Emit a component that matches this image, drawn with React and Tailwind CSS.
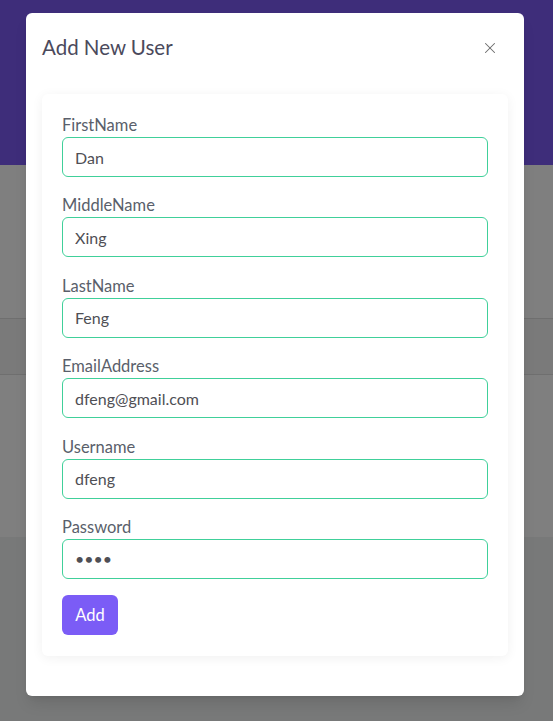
import React from 'react';
import { X } from 'lucide-react';

const fields = [
  { label: 'FirstName', value: 'Dan' },
  { label: 'MiddleName', value: 'Xing' },
  { label: 'LastName', value: 'Feng' },
  { label: 'EmailAddress', value: 'dfeng@gmail.com' },
  { label: 'Username', value: 'dfeng' },
  { label: 'Password', value: 'abcd', type: 'password' },
];

export default function App() {
  return (
    <div className="relative min-h-[721px] bg-[#787979] font-['Lato','Noto_Sans',sans-serif]">
      {/* dimmed page behind the dialog */}
      <div className="h-[165px] bg-[#3e2d7a]" />
      <div className="h-[153px] bg-[#7f7f7f]" />
      <div className="h-[57px] bg-[#7a7a7a] border-y border-[#6f6f6f]" />
      <div className="h-[162px] bg-[#7f7f7f]" />

      <div className="absolute left-[26px] top-[13px] w-[498px] bg-white rounded-md shadow-lg">
        <div className="flex items-center justify-between px-4 pt-5">
          <h2 className="text-[20.5px] leading-7 text-[#4b4a5c]">Add New User</h2>
          <button className="mr-[9px] mt-0.5 text-[#6b6b6b]">
            <X size={18} strokeWidth={1.4} />
          </button>
        </div>

        <div className="px-4 pt-[33px] pb-10">
          <div className="bg-white rounded-md px-5 pt-5 pb-[21px] shadow-[0_2px_12px_rgba(0,0,0,0.06)]">
            {fields.map((f) => (
              <div key={f.label} className="mb-[17.4px]">
                <label className="block text-[16.5px] leading-[22px] text-[#5a5f6b]">{f.label}</label>
                <input
                  readOnly
                  type={f.type || 'text'}
                  value={f.value}
                  className="mt-px block w-full h-10 px-3 rounded-md border border-[#40d09a] text-[16px] text-[#4f4f55] outline-none"
                />
              </div>
            ))}
            <button className="-mt-px h-10 w-14 rounded-md bg-[#7b5cf6] text-white text-[16.5px]">Add</button>
          </div>
        </div>
      </div>
    </div>
  );
}
